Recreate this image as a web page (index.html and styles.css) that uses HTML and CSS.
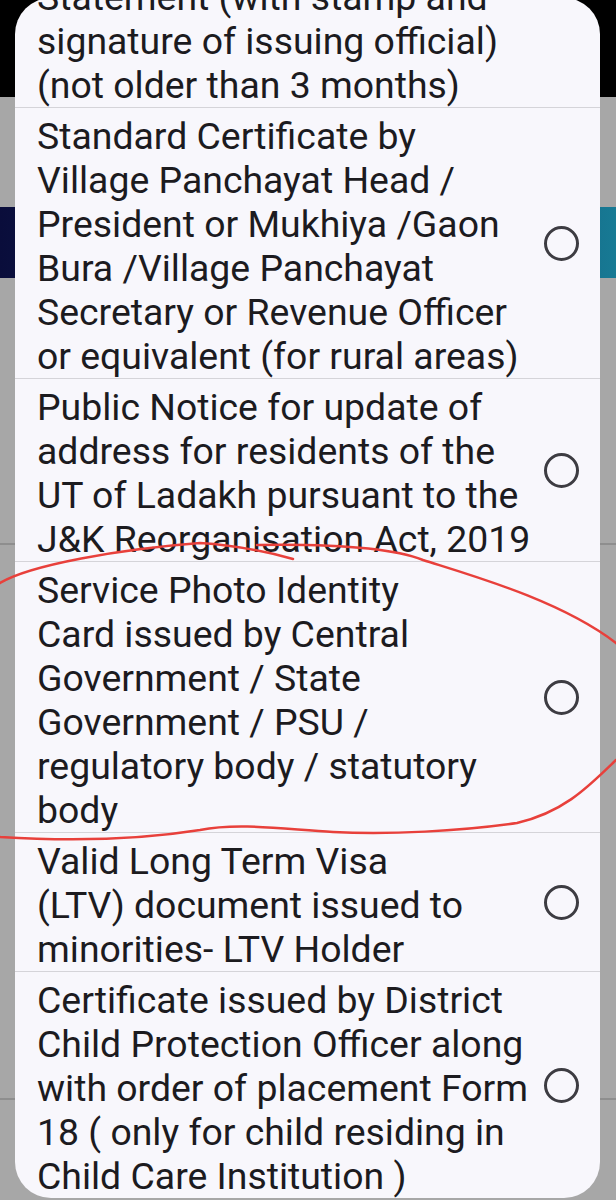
FILE: index.html
```html
<!DOCTYPE html>
<html lang="en">
<head>
<meta charset="utf-8">
<title>Select document</title>
<link rel="stylesheet" href="styles.css">
</head>
<body>
<div class="backdrop">
  <div class="top-bar"></div>
  <div class="gap-a"></div>
  <div class="banner"></div>
  <div class="gap-b"></div>
  <div class="rule"></div>
  <div class="gap-c"></div>
  <div class="rule"></div>
</div>

<div class="dialog">
  <ul class="options">
    <li class="option">
      <span class="label">Bank Account Passbook /<br>Post Office Passbook /<br>Bank / Post Office Account<br>Statement (with stamp and<br>signature of issuing official)<br>(not older than 3 months)</span>
      <span class="radio"></span>
    </li>
    <li class="option">
      <span class="label">Standard Certificate by<br>Village Panchayat Head /<br>President or Mukhiya /Gaon<br>Bura /Village Panchayat<br>Secretary or Revenue Officer<br>or equivalent (for rural areas)</span>
      <span class="radio"></span>
    </li>
    <li class="option">
      <span class="label">Public Notice for update of<br>address for residents of the<br>UT of Ladakh pursuant to the<br>J&amp;K Reorganisation Act, 2019</span>
      <span class="radio"></span>
    </li>
    <li class="option">
      <span class="label">Service Photo Identity<br>Card issued by Central<br>Government / State<br>Government / PSU /<br>regulatory body / statutory<br>body</span>
      <span class="radio"></span>
    </li>
    <li class="option">
      <span class="label">Valid Long Term Visa<br>(LTV) document issued to<br>minorities- LTV Holder</span>
      <span class="radio"></span>
    </li>
    <li class="option">
      <span class="label">Certificate issued by District<br>Child Protection Officer along<br>with order of placement Form<br>18 ( only for child residing in<br>Child Care Institution )</span>
      <span class="radio"></span>
    </li>
  </ul>
</div>

<svg class="scribble" width="616" height="1200" viewBox="0 0 616 1200" aria-hidden="true">
  <path d="M 257 545 C 320 544, 390 547, 423 560 C 470 575, 560 600, 616 643 C 660 680, 655 735, 616 760 C 590 785, 565 812, 517 823 C 460 831, 390 835, 333 832 C 290 830, 240 822, 200 830 C 150 838, 80 842, 0 837 C -45 815, -45 612, 0 583 C 30 565, 120 549, 200 543 C 232 545, 268 552, 293 559" />
</svg>
</body>
</html>
```

FILE: styles.css
```css
* {
  box-sizing: border-box;
}

html, body {
  margin: 0;
  padding: 0;
}

body {
  width: 616px;
  height: 1200px;
  overflow: hidden;
  background: #a7a7a7;
  font-family: Roboto, "Noto Sans", "Liberation Sans", sans-serif;
  position: relative;
}

.backdrop {
  display: flex;
  flex-direction: column;
}

.top-bar {
  height: 97px;
  background: #000;
}

.gap-a {
  height: 110px;
}

.banner {
  height: 71px;
  background: linear-gradient(90deg, #0a0d3b 0%, #0d2a5e 50%, #177a94 100%);
}

.gap-b {
  height: 265px;
}

.rule {
  height: 2px;
  background: #8e8e8e;
}

.gap-c {
  height: 553px;
}

.dialog {
  position: absolute;
  left: 15px;
  top: -2px;
  width: 585px;
  height: 1200px;
  background: #f8f7fc;
  border-radius: 36px;
  overflow: hidden;
}

.options {
  list-style: none;
  margin: -162px 0 0 0;
  padding: 0;
}

.option {
  display: flex;
  align-items: center;
  padding: 0 21px 0 22px;
  border-top: 1px solid #d5d4d9;
}

.option:first-child {
  border-top: none;
}

.label {
  flex: 1;
  padding-top: 6px;
  font-size: 37.4px;
  line-height: 44px;
  color: #1c1b1f;
  white-space: nowrap;
}

.option:first-child .label {
  padding-top: 7px;
}

.radio {
  flex: none;
  width: 35px;
  height: 35px;
  border: 3px solid #3d3c42;
  border-radius: 50%;
}

.scribble {
  position: absolute;
  left: 0;
  top: 0;
  overflow: visible;
  pointer-events: none;
}

.scribble path {
  fill: none;
  stroke: #e8403b;
  stroke-width: 2.5;
  stroke-linecap: round;
  stroke-linejoin: round;
}
```
